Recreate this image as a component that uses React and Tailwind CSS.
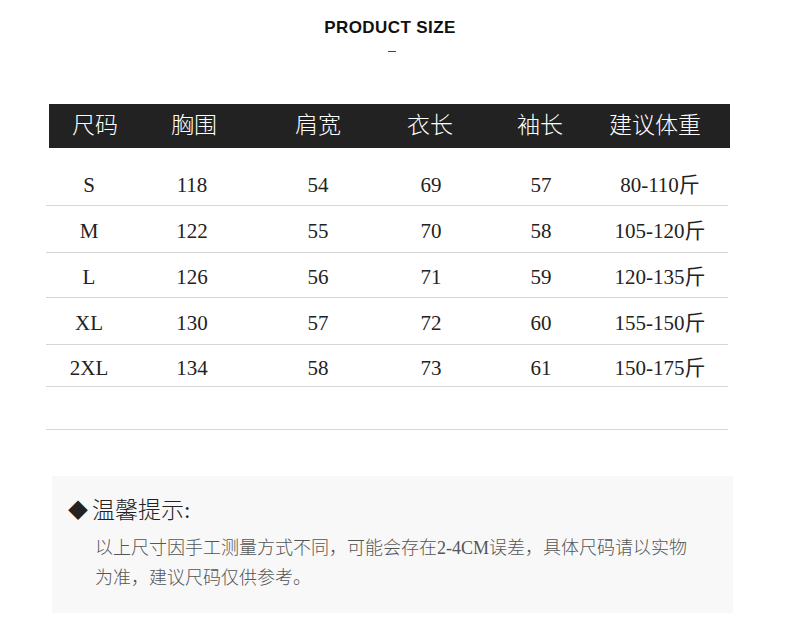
import React from 'react';

const headCols = 'grid grid-cols-[92px_106px_142px_82px_138px_92px_29px]';
const rowCols = 'grid grid-cols-[86px_120px_132px_94px_126px_112px_12px]';

const rows = [
  ['S', '118', '54', '69', '57', '80-110斤'],
  ['M', '122', '55', '70', '58', '105-120斤'],
  ['L', '126', '56', '71', '59', '120-135斤'],
  ['XL', '130', '57', '72', '60', '155-150斤'],
  ['2XL', '134', '58', '73', '61', '150-175斤'],
];

const rowH = ['h-[45px]', 'h-[47px]', 'h-[45px]', 'h-[47px]', 'h-[42px]'];

const heads = ['尺码', '胸围', '肩宽', '衣长', '袖长', '建议体重'];

export default function App() {
  return (
    <div className="w-[790px] h-[622px] bg-white overflow-hidden font-['Liberation_Serif','Noto_Sans_CJK_SC',serif] text-[#222]">
      {/* title */}
      <div className="pt-[18px] pr-[10px] flex flex-col items-center">
        <h1 className="font-['Liberation_Sans',sans-serif] font-bold text-[17px] tracking-[0.4px] leading-[20px] text-[#111]">
          PRODUCT SIZE
        </h1>
        <div className="mt-[13px] ml-[4px] w-[8px] h-[1px] bg-[#444]" />
      </div>

      {/* table */}
      <div className="mt-[52px] ml-[46px] w-[684px]">
        <div className={`${headCols} ml-[3px] h-[44px] items-center bg-[#222] text-white text-[23px] font-light`}>
          {heads.map((h) => (
            <div key={h} className="text-center">{h}</div>
          ))}
          <div />
        </div>

        <div className="mt-[13px] w-[682px]">
          {rows.map((r, i) => (
            <div
              key={r[0]}
              className={`${rowCols} ${rowH[i]} items-center pt-[6px] border-b border-[#d6d6d6] text-[21px]`}
            >
              {r.map((c, j) => (
                <div key={j} className="text-center">{c}</div>
              ))}
              <div />
            </div>
          ))}
          <div className="h-[43px] border-b border-[#d6d6d6]" />
        </div>
      </div>

      {/* tips */}
      <div className="mt-[46px] ml-[52px] w-[681px] h-[137px] bg-[#f8f8f8] pl-[16px] pt-[21px]">
        <div className="flex items-center text-[23px] leading-[28px] text-[#222] font-light">
          <span className="text-[20px] mr-[4px]">◆</span>
          <span>温馨提示:</span>
        </div>
        <p className="mt-[8px] pl-[27px] text-[18px] leading-[30px] text-[#555] font-light whitespace-nowrap">
          以上尺寸因手工测量方式不同，可能会存在2-4CM误差，具体尺码请以实物
          <br />
          为准，建议尺码仅供参考。
        </p>
      </div>
    </div>
  );
}
